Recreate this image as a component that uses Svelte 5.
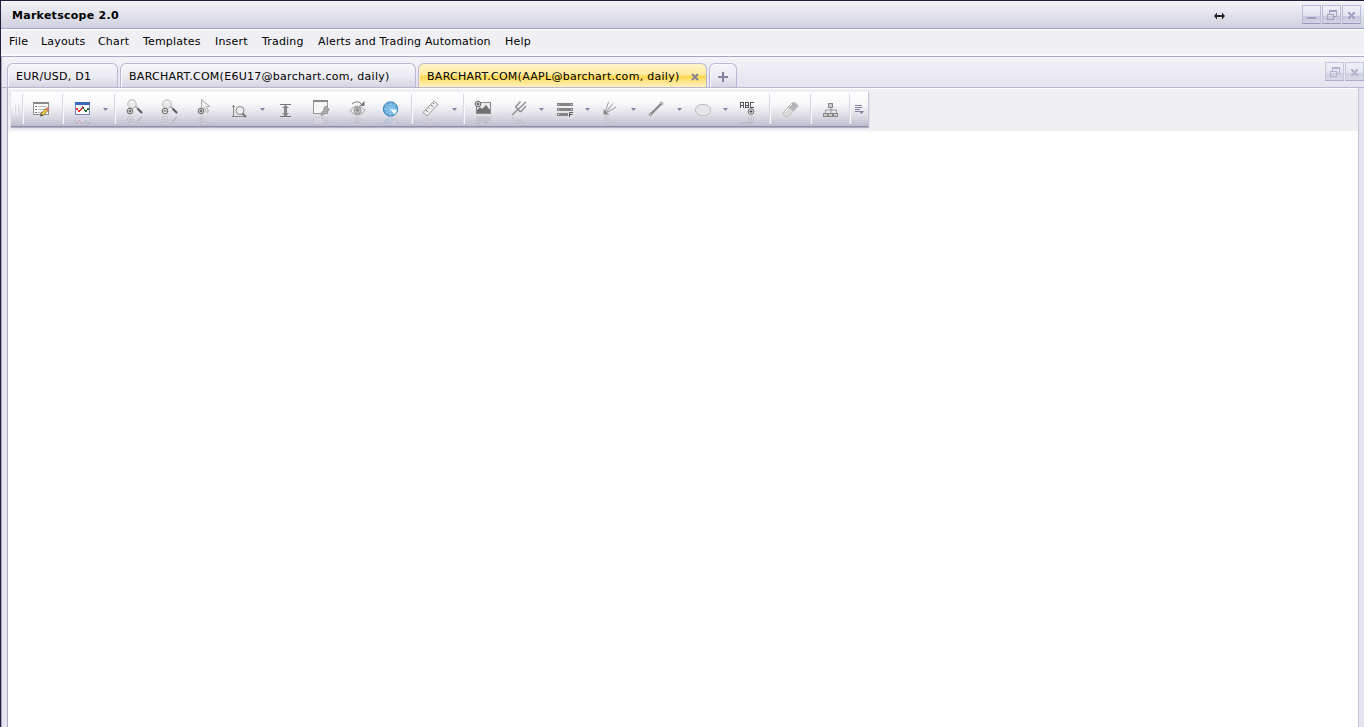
<script>
    const menus = [
        { label: "File", width: 32 },
        { label: "Layouts", width: 57 },
        { label: "Chart", width: 45 },
        { label: "Templates", width: 72 },
        { label: "Insert", width: 47 },
        { label: "Trading", width: 56 },
        { label: "Alerts and Trading Automation", width: 187 },
        { label: "Help", width: 40 },
    ];

    let active = $state(2);

    const tabs = [
        { label: "EUR/USD, D1", width: 111 },
        { label: "BARCHART.COM(E6U17@barchart.com, daily)", width: 296 },
        { label: "BARCHART.COM(AAPL@barchart.com, daily)", width: 289 },
    ];

    // icon, slot width, baseline of the reflection (if any)
    const tools = [
        ["grip", 9],
        ["sep", 10],
        ["note", 30],
        ["sep", 12],
        ["chart", 28, 18],
        ["caret", 12],
        ["sep", 12],
        ["zoomin", 35, 17],
        ["zoomout", 35, 17],
        ["cursor", 34, 17],
        ["measure", 29],
        ["caret", 17],
        ["vertical", 36],
        ["window", 36, 17.5],
        ["eye", 34, 18],
        ["globe", 29, 19],
        ["sep", 10],
        ["ruler", 30, 19],
        ["caret", 12],
        ["sep", 11],
        ["picture", 36, 17],
        ["fork", 28, 18],
        ["caret", 18],
        ["lines", 28],
        ["caret", 18],
        ["fan", 28, 17],
        ["caret", 17],
        ["line", 29],
        ["caret", 18],
        ["ellipse", 28],
        ["caret", 17],
        ["abc", 30, 17],
        ["sep", 12],
        ["eraser", 29],
        ["sep", 12],
        ["tree", 27],
        ["sep", 5],
        ["more", 14],
    ];
</script>

{#snippet badge(x, y, minus)}
    <circle cx={x} cy={y} r="2.8" fill="#eee" stroke="#666" />
    <path d="M{x - 1.5} {y}h3" stroke="#444" />
    {#if !minus}<path d="M{x} {y - 1.5}v3" stroke="#444" />{/if}
{/snippet}

{#snippet lens()}
    <circle cx="6" cy="6" r="4.3" fill="#e9e9e9" stroke="#bbb" />
    <path d="M4 4.500h4" stroke="#fff" />
    <path d="M9.500 8.500l2 1.500" stroke="#aaa" stroke-width="2" />
    <path d="M11.500 10.500l4.500 4.500" stroke="#555" stroke-width="2" />
{/snippet}

{#snippet icon(name)}
    {#if name === "note"}
        <rect x="1.5" y="4.500" width="15" height="12" fill="#fbfbfb" stroke="#8f8f8f" />
        <path d="M1 5h16" stroke="#888" stroke-width="2" />
        <path d="M3 8.500h2M3 11.500h2M3 14.500h2" stroke="#777" />
        <path d="M6 8.500h8M6 11.500h7M6 14.500h4" stroke="#b5b5b5" />
        <path d="M9.500 17l6-6" stroke="#78641e" stroke-width="3.400" />
        <path d="M10 16.500l5-5" stroke="#f2d14a" stroke-width="2.200" />
        <path d="M14.500 12l2-2" stroke="#d9737c" stroke-width="3" />
        <path d="M8 18.500l1-3 2 2z" fill="#4d4633" />
    {:else if name === "chart"}
        <rect x="1.5" y="4.500" width="14" height="12" fill="#fff" stroke="#6d87b9" />
        <path d="M1 5.500h15" stroke="#3768bd" stroke-width="3" />
        <g shape-rendering="crispEdges">
            <path d="M2 10h2v2h2v2h-2v-2h-2zM6 11h1v2h-1zM7 10h1v2h-1zM8 8h1v3h-1z" fill="#e2301e" />
            <path d="M9 9h1v2h-1zM10 11h1v2h-1zM11 12h1v2h-1zM12 12h1v2h-1zM13 10h2v2h-2z" fill="#286d34" />
        </g>
    {:else if name === "caret"}
        <path d="M1 10h5l-2.500 3z" fill="#8583a5" />
    {:else if name === "zoomin"}
        {@render lens()}
        {@render badge(4, 13, false)}
    {:else if name === "zoomout"}
        {@render lens()}
        {@render badge(4, 13, true)}
    {:else if name === "cursor"}
        <path d="M5.500 1.500v10l3-2 2 5 2-1-2-5h3.500z" fill="#eee" stroke="#aaa" />
        {@render badge(5, 13, false)}
    {:else if name === "measure"}
        <path d="M3.500 7v12M2 8.500h3M2 18.500h14" stroke="#888" />
        <circle cx="10" cy="12.500" r="4" fill="#eee" stroke="#888" />
        <path d="M12.500 15.500l3.500 3.500" stroke="#777" stroke-width="2" />
    {:else if name === "vertical"}
        <path d="M4 6.500h11M4 18.500h11" stroke="#777" />
        <path d="M9.500 8v10" stroke="#888" stroke-width="3" />
        <path d="M6 10l3.500-3 3.500 3zM6 15l3.500 3 3.500-3z" fill="#888" />
    {:else if name === "window"}
        <rect x="1.500" y="2.500" width="14" height="13" fill="#f5f5f5" stroke="#999" />
        <path d="M1 3h15" stroke="#888" stroke-width="2" />
        <path d="M8.500 15.500l3-3q0-4 3-4.500l-.5 2.500 1 1 2-1q.5 3-4 4l-2 2.500q-2 1-2.500-1.500z" fill="#aaa" stroke="#999" />
    {:else if name === "eye"}
        <path d="M2 12.500q7.500-9 15 0q-7.500 9-15 0z" fill="#eee" stroke="#999" />
        <circle cx="9.500" cy="12.500" r="3.500" fill="#bbb" stroke="#999" />
        <circle cx="9.500" cy="12" r="1.500" fill="#888" />
        <path d="M4 6q5-4.500 9.500 0" stroke="#777" fill="none" />
        <path d="M16.500 3v5h-5z" fill="#777" />
    {:else if name === "globe"}
        <circle cx="8.500" cy="11" r="7.200" fill="#5fa9dc" stroke="#3c80b4" />
        <g fill="none" stroke="#a5d3ee" stroke-width=".7">
            <circle cx="8.500" cy="11" r="2.500" />
            <circle cx="8.500" cy="11" r="4.700" />
            <path d="M8.500 4v14M1.500 11h14M3.500 6l10 10M3.500 16l10-10" />
        </g>
        <path d="M8.500 11l6.500 1q-.5 3-3 4.500z" fill="#eef9ff" />
    {:else if name === "ruler"}
        <path d="M2 14.500l11-11.500 4 3.500-11 11.500z" fill="#eee" stroke="#999" />
        <path d="M5 12l2 2M7.500 9.500l1 1M10 7l2 2M12 5l1 1" stroke="#777" />
    {:else if name === "picture"}
        <rect x="2.500" y="4.500" width="14" height="11" fill="#ececec" stroke="#888" />
        <path d="M3 15v-3l3-3 2 2 4-4 4 5v3z" fill="#707070" />
        {@render badge(4, 6, false)}
    {:else if name === "fork"}
        <path d="M2 17l14-13M5.500 9l5 5M5.500 9l5-5.500M10.500 14l5.500-6" stroke="#8d8d8d" stroke-width="1.400" />
    {:else if name === "lines"}
        {#each [5, 10, 15] as y}
            <rect x="1" {y} width="16" height="3" fill="#858585" />
            <path d="M2 {y + 1.5}h1M15 {y + 1.5}h1" stroke="#ddd" />
        {/each}
        <rect x="12" y="14" width="6" height="6" fill="#e2e2e9" />
        <path d="M13.500 19v-4.500h3.500M13.500 16.500h3" fill="none" stroke="#555" />
    {:else if name === "fan"}
        <path d="M2.500 16l4-12M3 15.500l8-10M3 15.500l11-6.500" stroke="#999" fill="none" />
        <path d="M1.500 11v5.500h6l-3-2z" fill="#888" />
    {:else if name === "line"}
        <path d="M4 16l10-10" stroke="#888" stroke-width="2.300" />
        <circle cx="3.500" cy="16.500" r="1.300" fill="#ddd" stroke="#888" />
        <circle cx="14.500" cy="5.500" r="1.300" fill="#ddd" stroke="#888" />
    {:else if name === "ellipse"}
        <rect x="1.500" y="6.500" width="15" height="11" rx="6" fill="#e7e6ea" stroke="#bbb" />
    {:else if name === "abc"}
        <g fill="none" stroke="#555" shape-rendering="crispEdges">
            <path d="M1.500 10v-6M4.500 10v-6M1 4.500h4M1 7.500h4" />
            <path d="M6.500 10v-6M9.500 10v-6M6 4.500h4M6 7.500h4M6 9.500h4" />
            <path d="M11.500 10v-6M11 4.500h4M11 9.500h4" />
        </g>
        {@render badge(12, 13.5, false)}
    {:else if name === "eraser"}
        <path d="M1.500 15.500l9-10q2-2 4-.500l2 2q1 1-1 3l-8 8q-2 1.500-4 0z" fill="#ddd" stroke="#bbb" />
        <path d="M7 9l5 4 4-4q1-1 0-2l-3-2q-1-.5-2 0z" fill="#b5b5b5" />
        <path d="M9 8l2-2M4 14l3-3" stroke="#fff" />
    {:else if name === "tree"}
        <path d="M9 9v3M3.500 15v-3h11v3M9 12v3" fill="none" stroke="#999" />
        <g fill="#ccc" stroke="#888">
            <rect x="6.500" y="5.500" width="4" height="4" />
            <rect x="1.500" y="15.500" width="4" height="3" />
            <rect x="6.500" y="15.500" width="4" height="3" />
            <rect x="11.500" y="15.500" width="4" height="3" />
        </g>
    {:else if name === "more"}
        <path d="M1 7.500h7M1 9.500h7M1 11.500h5M1 13.500h4" stroke="#8583a5" />
        <path d="M5 13h5l-2.500 3z" fill="#77759a" />
    {/if}
{/snippet}

{#snippet boxIcon(kind)}
    <svg width="17" height="17" viewBox="0 0 17 17" fill="none" shape-rendering="crispEdges">
        {#if kind === "min"}
            <path d="M4 12h9" stroke="#a0a1c2" stroke-width="2" />
        {:else if kind === "restore"}
            <path d="M6.500 8v-3.500h7v6h-3M6 5h8" stroke="#a0a1c2" />
            <path d="M4.500 8.500h6v5h-6zM4 8h7" stroke="#a0a1c2" />
        {:else}
            <path d="M5 6h2v1h1v1h1v-1h1v-1h2v2h-1v1h-1v1h1v1h1v2h-2v-1h-1v-1h-1v1h-1v1h-2v-2h1v-1h1v-1h-1v-1h-1z" fill="#a0a1c2" />
        {/if}
    </svg>
{/snippet}

<div class="window">
    <header class="titlebar">
        <h1>Marketscope 2.0</h1>
        <svg class="resize" width="11" height="8" viewBox="0 0 11 8">
            <path d="M0 4l3-3.500v2.500h5v-2.500l3 3.500-3 3.500v-2.500h-5v2.500z" fill="#222" />
        </svg>
        <div class="boxes">
            {#each ["min", "restore", "close"] as kind}
                <button class="box" aria-label={kind}>{@render boxIcon(kind)}</button>
            {/each}
        </div>
    </header>

    <nav>
        {#each menus as menu}
            <span style:width="{menu.width}px">{menu.label}</span>
        {/each}
    </nav>

    <div class="body">
        <div class="tabstrip">
            {#each tabs as tab, i}
                <button class="tab" class:active={i === active} style:width="{tab.width}px" onclick={() => (active = i)}>
                    <span>{tab.label}</span>
                    {#if i === active}
                        <svg width="8" height="8" viewBox="0 0 8 8">
                            <path d="M1 1l6 6M7 1l-6 6" stroke="#85829a" stroke-width="2" />
                        </svg>
                    {/if}
                </button>
            {/each}
            <button class="tab plus" aria-label="add">
                <svg width="10" height="10" viewBox="0 0 10 10"><path d="M5 0v10M0 5h10" stroke="#8583a0" stroke-width="2" /></svg>
            </button>
            <div class="boxes small">
                <button class="box" aria-label="restore">{@render boxIcon("restore")}</button>
                <button class="box" aria-label="close">{@render boxIcon("close")}</button>
            </div>
        </div>

        <main>
            <div class="dock">
                <div class="toolbar">
                    {#each tools as [name, width, base]}
                        <div class="slot" class:sep={name === "sep"} class:grip={name === "grip"} style:width="{width}px">
                            {#if name !== "sep" && name !== "grip"}
                                <svg width="18" height="26" viewBox="0 0 18 26" fill="none">
                                    {@render icon(name)}
                                    {#if base}
                                        <g transform="translate(0 {base * 2}) scale(1 -1)" opacity="0.15">{@render icon(name)}</g>
                                    {/if}
                                </svg>
                            {/if}
                        </div>
                    {/each}
                </div>
            </div>
        </main>
    </div>
</div>

<style>
    :global(body) {
        background: #fff;
        overflow: hidden;
    }
    .window {
        box-sizing: border-box;
        height: 727px;
        display: flex;
        flex-direction: column;
        border-top: 1px solid #20203a;
        border-left: 1px solid #20203a;
        background: #f0eff4;
        font-family: Verdana, "DejaVu Sans", sans-serif;
        font-size: 11px;
        color: #000;
    }
    .titlebar {
        box-sizing: border-box;
        height: 28px;
        display: flex;
        align-items: center;
        padding: 0 3px 0 11px;
        background: linear-gradient(#f4f3f9, #e4e4ed 45%, #cfd0de);
        border-bottom: 1px solid #a3a4c4;
    }
    h1 {
        margin: 0;
        padding-top: 2px;
        font-size: 11px;
        line-height: 14px;
        letter-spacing: 0.27px;
        flex: 1;
    }
    .resize {
        margin-right: 77px;
        margin-top: 2px;
    }
    .boxes {
        display: flex;
        gap: 1px;
    }
    .box {
        width: 19px;
        height: 19px;
        padding: 0;
        border: 1px solid #bcbdd6;
        border-bottom-color: #9798b9;
        background: linear-gradient(#f0f1f8, #dfe1ed 60%, #c6c8dc 62%, #d2d4e4);
        display: flex;
    }
    nav {
        box-sizing: border-box;
        height: 27px;
        display: flex;
        padding-left: 8px;
        line-height: 24px;
        letter-spacing: 0.18px;
        white-space: nowrap;
        border-top: 1px solid #fff;
        border-bottom: 2px solid #fafafd;
    }
    nav span {
        flex: none;
    }
    .body {
        flex: 1;
        display: flex;
        flex-direction: column;
        border-top: 1px solid #aaa7c3;
        border-left: 1px solid #aaa9c0;
        background: #e4e3ee;
    }
    .tabstrip {
        box-sizing: border-box;
        height: 31px;
        display: flex;
        align-items: flex-end;
        gap: 2px;
        padding-left: 5px;
        background: linear-gradient(#f3f2f7, #e5e4ef);
        border-bottom: 1px solid #b9b8ce;
    }
    .tab {
        box-sizing: border-box;
        height: 24px;
        display: flex;
        align-items: center;
        padding: 2px 0 0 8px;
        font: inherit;
        letter-spacing: 0.28px;
        color: inherit;
        white-space: nowrap;
        border: 1px solid #b9b8d4;
        border-bottom: 0;
        border-radius: 6px 6px 0 0;
        background: linear-gradient(#f5f4f9, #ecebf2 55%, #d5d4e1);
        box-shadow: inset 1px 1px #f8f8fc;
    }
    .tab span {
        flex: 1;
        text-align: left;
    }
    .active {
        padding-right: 7px;
        background: linear-gradient(#fff6cc, #ffeaa0 45%, #ffd84f 55%, #ffeaa0 85%, #fff0b9);
        box-shadow: inset 1px 1px #fff2bd;
    }
    .plus {
        width: 28px;
        padding-left: 8px;
    }
    .small {
        margin: 0 0 6px auto;
    }
    .small .box {
        opacity: 0.75;
    }
    main {
        flex: 1;
        margin: 0 5px 0 5px;
        border-left: 1px solid #aaa9c0;
        border-right: 1px solid #c5c4d6;
        background: #fff;
    }
    .dock {
        box-sizing: border-box;
        height: 43px;
        padding: 3px 0 0 3px;
        background: #f0eff4;
        border-top: 1px solid #fff;
    }
    .toolbar {
        box-sizing: border-box;
        width: 858px;
        height: 35px;
        display: flex;
        border-bottom: 1px solid #8e8dab;
        border-right: 1px solid #c8c7d9;
        background: linear-gradient(#fff, #f8f8fa 35%, #dedde6 70%, #bebdcf);
        box-shadow: 0 1px 1px #b4b3c6;
        padding-left: 2px;
    }
    .slot {
        flex: none;
    }
    .slot svg {
        display: block;
        margin-top: 6px;
    }
    .sep {
        box-sizing: border-box;
        margin: 2px 0;
        border-left: 1px solid #d7d6e3;
        box-shadow: inset 1px 0 #fafafc;
    }
    .grip {
        height: 9px;
        margin-top: 13px;
        background: repeating-linear-gradient(90deg, #fff 0 1px, #d4d4dd 1px 2px, transparent 2px 3px);
        background-size: 6px;
        background-repeat: no-repeat;
        background-position: 1px 0;
    }
</style>
